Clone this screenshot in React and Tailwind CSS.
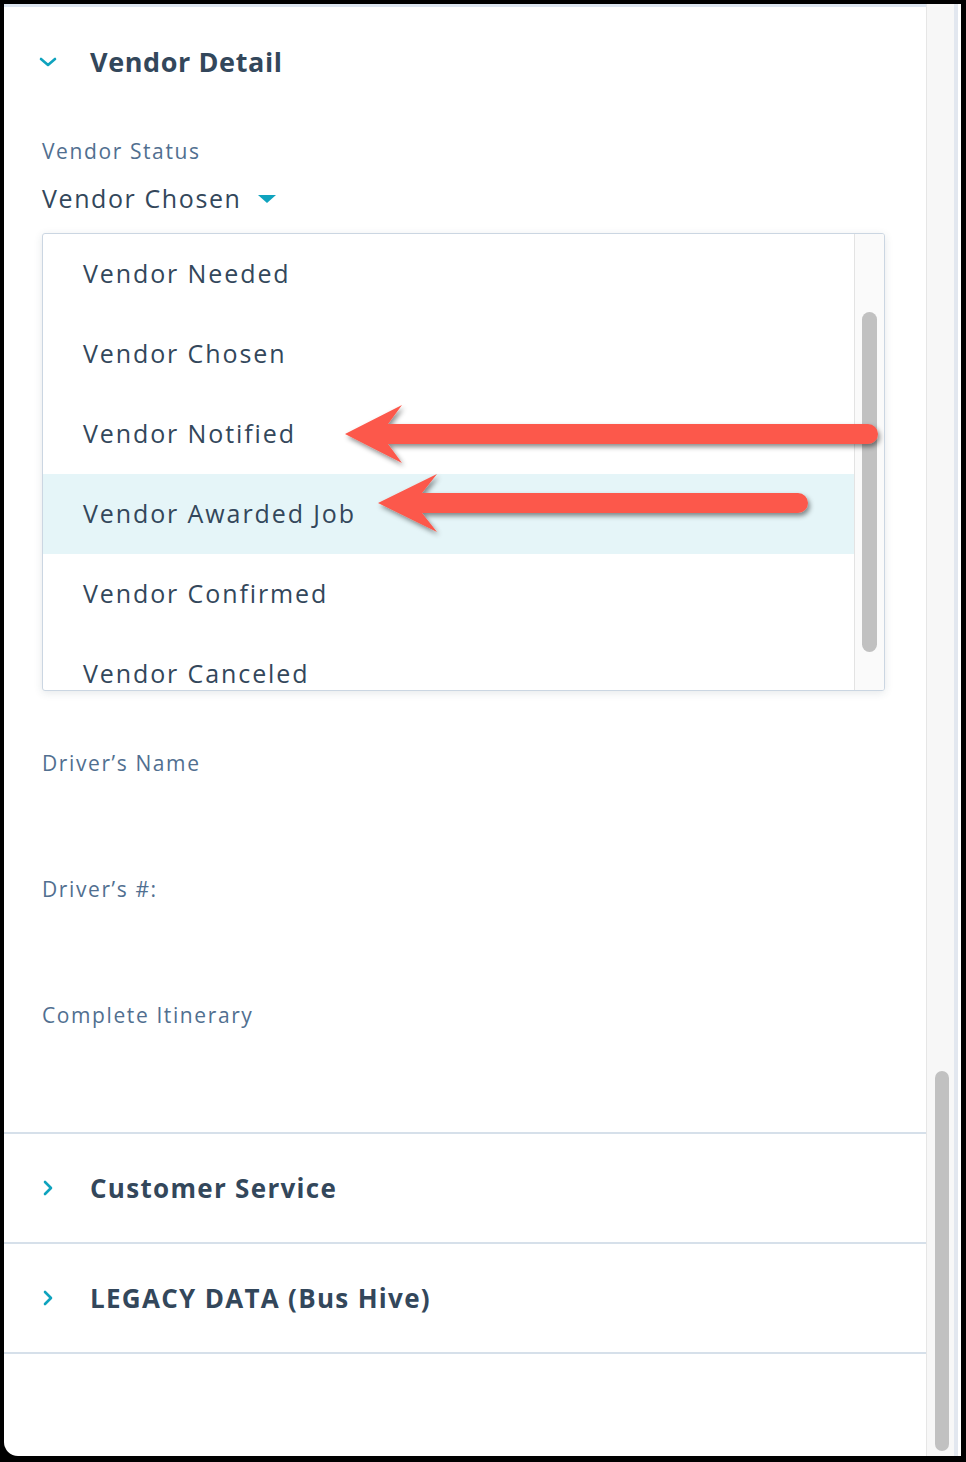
import React from 'react';

const font = { fontFamily: '"Open Sans", "Noto Sans", sans-serif' };

const options = [
  'Vendor Needed',
  'Vendor Chosen',
  'Vendor Notified',
  'Vendor Awarded Job',
  'Vendor Confirmed',
  'Vendor Canceled',
];

const ChevronDown = () => (
  <svg width="20" height="12" viewBox="0 0 20 12" className="shrink-0">
    <polyline points="3,3 10,9 17,3" fill="none" stroke="#0fa3be" strokeWidth="2.6" strokeLinecap="round" strokeLinejoin="round" />
  </svg>
);

const ChevronRight = () => (
  <svg width="12" height="16" viewBox="0 0 12 16" className="shrink-0">
    <polyline points="3,2 9,8 3,14" fill="none" stroke="#0fa3be" strokeWidth="2.6" strokeLinecap="round" strokeLinejoin="round" />
  </svg>
);

const Field = ({ label }) => (
  <div className="h-[126px]">
    <div className="text-[21px] leading-[30px] text-[#516f90] tracking-[1.6px]">{label}</div>
  </div>
);

const Section = ({ title }) => (
  <div className="h-[110px] border-b-2 border-[#d6e0ea] flex items-center pl-[38px]">
    <ChevronRight />
    <span className="ml-[36px] text-[26px] font-bold text-[#33475b] tracking-[1.3px]">{title}</span>
  </div>
);

const Arrows = () => (
  <svg className="absolute left-0 top-0 pointer-events-none" width="966" height="1462" viewBox="0 0 966 1462">
    <defs>
      <filter id="sh" x="-10%" y="-50%" width="120%" height="200%">
        <feDropShadow dx="2" dy="3" stdDeviation="2.5" floodColor="#000" floodOpacity="0.45" />
      </filter>
    </defs>
    <path
      d="M345 434 L402 405 L388 424 L868 424 A10 10 0 0 1 868 444 L388 444 L402 463 Z"
      fill="#fc584b"
      filter="url(#sh)"
    />
    <path
      d="M378 503 L437 474 L422 493 L798 493 A10 10 0 0 1 798 513 L422 513 L437 532 Z"
      fill="#fc584b"
      filter="url(#sh)"
    />
  </svg>
);

export default function App() {
  return (
    <div className="relative w-[966px] h-[1462px] bg-black pt-[4px] pl-[4px] pr-[5px] pb-[6px]" style={font}>
      <div className="flex h-full bg-white rounded-bl-[14px] overflow-hidden">
        {/* Main panel */}
        <div className="flex-1 flex flex-col border-t-[3px] border-[#dce5f0]">
          <div className="h-[110px] flex items-center pl-[34px]">
            <ChevronDown />
            <span className="ml-[32px] text-[27px] font-bold text-[#33475b] tracking-[0.6px]">Vendor Detail</span>
          </div>

          <div className="pl-[38px] pr-[41px]">
            <div className="mt-[19px] text-[21px] leading-[30px] text-[#516f90] tracking-[1.6px]">Vendor Status</div>
            <div className="mt-[16px] flex items-center h-[34px]">
              <span className="text-[25px] text-[#33475b] tracking-[1.6px]">Vendor Chosen</span>
              <svg width="18" height="10" viewBox="0 0 18 10" className="ml-[16px]">
                <path d="M0 1 L18 1 L9 9 Z" fill="#0fa3be" />
              </svg>
            </div>

            <div className="mt-[17px] h-[458px] border border-[#cbd6e2] rounded-[3px] bg-white shadow-[0_2px_8px_rgba(45,62,80,0.12)] flex overflow-hidden">
              <div className="flex-1 overflow-hidden">
                {options.map((o) => (
                  <div
                    key={o}
                    className={`h-[80px] shrink-0 flex items-center pl-[40px] text-[25px] text-[#33475b] tracking-[1.9px] ${o === 'Vendor Awarded Job' ? 'bg-[#e5f5f8]' : ''}`}
                  >
                    {o}
                  </div>
                ))}
              </div>
              <div className="w-[30px] border-l border-[#e3e3e3] bg-[#fafafa] pt-[78px] pl-[7px]">
                <div className="w-[15px] h-[340px] rounded-full bg-[#c1c1c1]" />
              </div>
            </div>

            <div className="mt-[57px]">
              <Field label="Driver’s Name" />
              <Field label="Driver’s #:" />
              <div className="h-[132px]">
                <div className="text-[21px] leading-[30px] text-[#516f90] tracking-[1.6px]">Complete Itinerary</div>
              </div>
            </div>
          </div>

          <div className="border-t-2 border-[#d6e0ea]">
            <Section title="Customer Service" />
            <Section title="LEGACY DATA (Bus Hive)" />
          </div>
        </div>

        {/* Page scrollbar */}
        <div className="w-[35px] flex border-l border-[#e6e6e6]">
          <div className="flex-1 bg-[#f7f7f7] flex flex-col justify-end pl-[8px] pb-[5px]">
            <div className="w-[14px] h-[380px] rounded-full bg-[#c1c1c1]" />
          </div>
          <div className="w-[4px] bg-[#e2e7ef]" />
          <div className="w-[3px] bg-white" />
        </div>
      </div>
      <Arrows />
    </div>
  );
}
